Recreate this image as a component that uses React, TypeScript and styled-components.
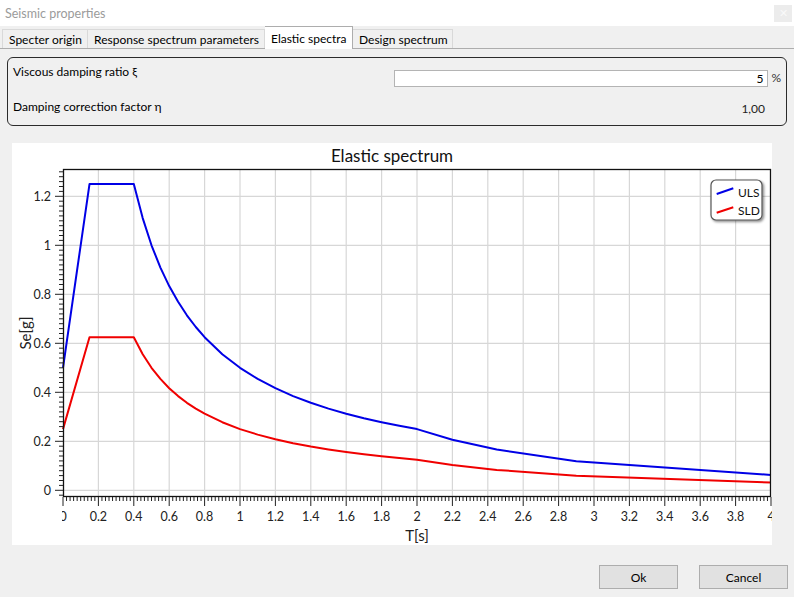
import styled, { createGlobalStyle } from "styled-components";

const GlobalStyle = createGlobalStyle`
  html, body {
    margin: 0;
    padding: 0;
    background: #f0f0f0;
  }
  body {
    font-family: Lato, "Noto Sans", sans-serif;
    font-size: 12px;
    color: #000;
  }
`;

const Window = styled.div`
  width: 794px;
  height: 597px;
  display: flex;
  flex-direction: column;
  background: #f0f0f0;
  overflow: hidden;
`;

const TitleBar = styled.div`
  height: 26px;
  display: flex;
  align-items: center;
  justify-content: space-between;
  background: #fff;
  padding: 0 2px 0 5px;
`;

const Caption = styled.span`
  color: #9b9b9b;
  font-size: 12.5px;
`;

const CloseButton = styled.div`
  width: 18px;
  height: 17px;
  display: flex;
  align-items: center;
  justify-content: center;
  background: #ececec;
  color: #f9f9f9;
  font-size: 11px;
`;

const TabStrip = styled.div`
  height: 22px;
  display: flex;
  align-items: flex-end;
  padding-left: 2px;
  border-bottom: 1px solid #adadad;
`;

const Tab = styled.div<{ $active?: boolean; $w: number }>`
  box-sizing: border-box;
  width: ${(p) => p.$w}px;
  height: ${(p) => (p.$active ? 23 : 19)}px;
  margin-bottom: ${(p) => (p.$active ? -1 : 0)}px;
  display: flex;
  align-items: center;
  padding-left: 6px;
  white-space: nowrap;
  background: ${(p) => (p.$active ? "#fff" : "#f0f0f0")};
  border: 1px solid ${(p) => (p.$active ? "#adadad" : "#d9d9d9")};
  border-bottom: none;
  & + & {
    border-left: ${(p) => (p.$active ? "1px solid #adadad" : "none")};
  }
`;

const Body = styled.div`
  flex: 1;
  display: flex;
  flex-direction: column;
  padding: 8px 7px 0 7px;
`;

const GroupBox = styled.div`
  box-sizing: border-box;
  height: 69px;
  border: 1px solid #2b2b2b;
  border-radius: 6px;
  padding: 6px 5px 0 5px;
  display: flex;
  flex-direction: column;
`;

const FieldRow = styled.div<{ $gap?: number }>`
  display: flex;
  align-items: flex-start;
  margin-top: ${(p) => p.$gap ?? 0}px;
`;

const FieldLabel = styled.span`
  flex: 1;
  line-height: 16px;
`;

const NumberInput = styled.div`
  box-sizing: border-box;
  width: 374px;
  height: 17px;
  margin-top: 6px;
  border: 1px solid #b4b4b4;
  background: #fff;
  text-align: right;
  padding-right: 4px;
  line-height: 15px;
`;

const Unit = styled.span`
  margin: 6px 0 0 3px;
  line-height: 16px;
  color: #333;
`;

const Value = styled.span`
  margin: 2px 16px 0 0;
  line-height: 16px;
  color: #222;
`;

const ChartPanel = styled.div`
  width: 760px;
  height: 402px;
  margin: 17px 0 0 5px;
  background: #fff;
  overflow: hidden;
`;

const ChartSvg = styled.svg`
  display: block;
  font-family: Lato, "Noto Sans", sans-serif;
`;

const Footer = styled.div`
  display: flex;
  justify-content: flex-end;
  gap: 21px;
  margin: 20px -1px 0 0;
`;

const Button = styled.div<{ $w: number }>`
  box-sizing: border-box;
  width: ${(p) => p.$w}px;
  height: 24px;
  display: flex;
  align-items: center;
  justify-content: center;
  background: #e1e1e1;
  border: 1px solid #adadad;
`;

// plot geometry inside the chart panel
const LEFT = 51;
const RIGHT = 759;
const TOP = 26;
const BOTTOM = 354;
const X_SCALE = 177;
const Y_ZERO = 347.3;
const Y_SCALE = 245;

const sx = (t: number) => LEFT + t * X_SCALE;
const sy = (v: number) => Y_ZERO - v * Y_SCALE;

const spectrum = (t: number, a0: number, peak: number) => {
  const tb = 0.15;
  const tc = 0.4;
  const td = 2.0;
  if (t < tb) return a0 + ((peak - a0) * t) / tb;
  if (t < tc) return peak;
  if (t < td) return (peak * tc) / t;
  return (peak * tc * td) / (t * t);
};

const periods = [
  0, 0.15, 0.4, 0.45, 0.5, 0.55, 0.6, 0.65, 0.7, 0.75, 0.8, 0.9, 1.0, 1.1,
  1.2, 1.3, 1.4, 1.5, 1.6, 1.7, 1.8, 1.9, 2.0, 2.2, 2.45, 2.9, 4.0,
];

const path = (a0: number, peak: number) =>
  periods
    .map((t, i) => `${i ? "L" : "M"}${sx(t).toFixed(1)},${sy(spectrum(t, a0, peak)).toFixed(1)}`)
    .join(" ");

const fmt = (v: number) => String(Number(v.toFixed(1)));

const range = (n: number) => Array.from({ length: n }, (_, i) => i);

const ElasticChart = () => {
  const xMajor = range(21).map((i) => i * 0.2);
  const yMajor = range(7).map((i) => i * 0.2);
  const xMinor = range(201).map((i) => i * 0.02);
  const yMinor = range(67).map((i) => -0.02 + i * 0.02);

  return (
    <ChartSvg width={760} height={402} viewBox="0 0 760 402">
      <defs>
        <clipPath id="xlabels">
          <rect x={50} y={360} width={710} height={30} />
        </clipPath>
        <filter id="legendShadow" x="-20%" y="-20%" width="150%" height="150%">
          <feDropShadow dx="1.5" dy="1.5" stdDeviation="1.2" floodColor="#000" floodOpacity="0.45" />
        </filter>
      </defs>

      <text x={380} y={19} fontSize={17} textAnchor="middle" fill="#111">
        Elastic spectrum
      </text>

      {xMajor.slice(1, -1).map((t) => (
        <line key={`gx${t}`} x1={sx(t)} x2={sx(t)} y1={TOP} y2={BOTTOM} stroke="#d7d7d7" strokeWidth={1.2} />
      ))}
      {yMajor.map((v) => (
        <line key={`gy${v}`} x1={LEFT} x2={RIGHT} y1={sy(v)} y2={sy(v)} stroke="#d7d7d7" strokeWidth={1.2} />
      ))}

      <path d={path(0.25, 0.625)} fill="none" stroke="#f00000" strokeWidth={2} strokeLinejoin="round" />
      <path d={path(0.5, 1.25)} fill="none" stroke="#0000e6" strokeWidth={2} strokeLinejoin="round" />

      <rect x={LEFT + 0.5} y={TOP + 0.5} width={RIGHT - LEFT - 1} height={BOTTOM - TOP - 1} fill="none" stroke="#111" strokeWidth={1.3} />

      {xMinor.map((t, i) => (
        <line key={`tx${i}`} x1={sx(t)} x2={sx(t)} y1={BOTTOM} y2={BOTTOM + (i % 10 === 0 ? 9 : 4)} stroke="#222" strokeWidth={1} />
      ))}
      {yMinor.map((v, i) => (
        <line key={`ty${i}`} x1={LEFT - ((i - 1) % 10 === 0 ? 8 : 4)} x2={LEFT} y1={sy(v)} y2={sy(v)} stroke="#222" strokeWidth={1} />
      ))}

      {yMajor.map((v) => (
        <text key={`ly${v}`} x={39} y={sy(v) + 4.5} fontSize={12.5} textAnchor="end" fill="#222">
          {fmt(v)}
        </text>
      ))}
      <g clipPath="url(#xlabels)">
        {xMajor.map((t) => (
          <text key={`lx${t}`} x={sx(t)} y={378} fontSize={12.5} textAnchor="middle" fill="#222">
            {fmt(t)}
          </text>
        ))}
      </g>

      <text x={(LEFT + RIGHT) / 2} y={398} fontSize={15} textAnchor="middle" fill="#222">
        T[s]
      </text>
      <text
        x={0}
        y={0}
        fontSize={15}
        textAnchor="middle"
        fill="#222"
        transform={`translate(19 ${(TOP + BOTTOM) / 2}) rotate(-90)`}
      >
        Se[g]
      </text>

      <g>
        <rect x={699} y={37} width={51} height={40} rx={5} fill="#fff" stroke="#555" strokeWidth={1.2} filter="url(#legendShadow)" />
        <line x1={704.7} y1={51} x2={721.3} y2={45.3} stroke="#0000e6" strokeWidth={2} />
        <text x={726} y={54} fontSize={12} fill="#111">ULS</text>
        <line x1={704.7} y1={69.7} x2={721.3} y2={64.3} stroke="#f00000" strokeWidth={2} />
        <text x={726} y={72} fontSize={12} fill="#111">SLD</text>
      </g>
    </ChartSvg>
  );
};

const tabs = [
  { label: "Specter origin", w: 86 },
  { label: "Response spectrum parameters", w: 177 },
  { label: "Elastic spectra", w: 88, active: true },
  { label: "Design spectrum", w: 100 },
];

const App = () => (
  <>
    <GlobalStyle />
    <Window>
      <TitleBar>
        <Caption>Seismic properties</Caption>
        <CloseButton>✕</CloseButton>
      </TitleBar>
      <TabStrip>
        {tabs.map((t) => (
          <Tab key={t.label} $w={t.w} $active={t.active}>
            {t.label}
          </Tab>
        ))}
      </TabStrip>
      <Body>
        <GroupBox>
          <FieldRow>
            <FieldLabel>Viscous damping ratio ξ</FieldLabel>
            <NumberInput>5</NumberInput>
            <Unit>%</Unit>
          </FieldRow>
          <FieldRow $gap={12}>
            <FieldLabel>Damping correction factor η</FieldLabel>
            <Value>1,00</Value>
          </FieldRow>
        </GroupBox>
        <ChartPanel>
          <ElasticChart />
        </ChartPanel>
        <Footer>
          <Button $w={79}>Ok</Button>
          <Button $w={89}>Cancel</Button>
        </Footer>
      </Body>
    </Window>
  </>
);

export default App;
